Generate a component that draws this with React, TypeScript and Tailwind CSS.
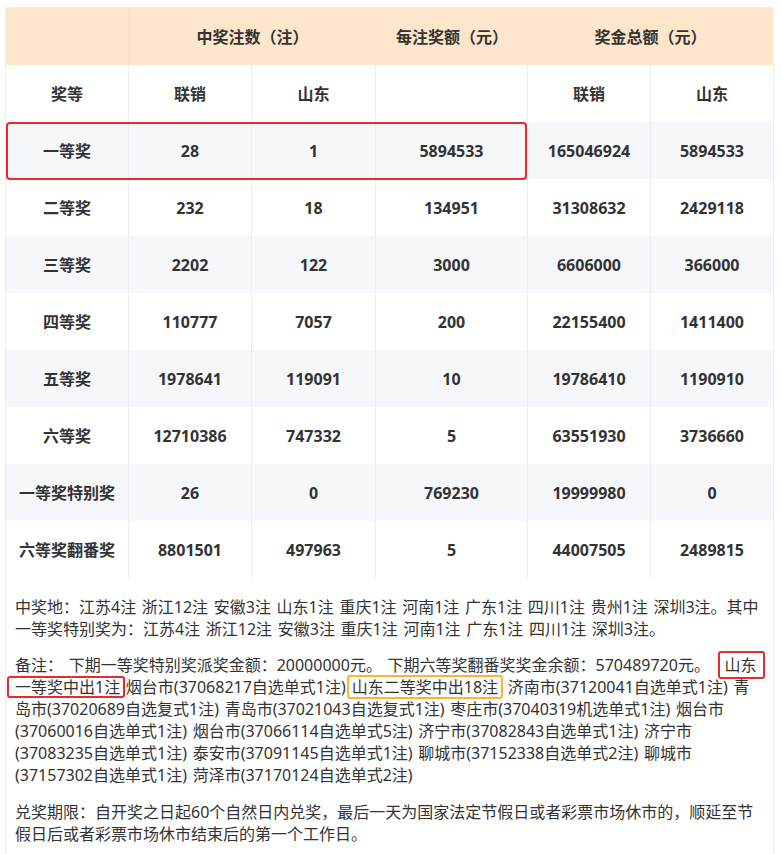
import React from 'react'

const rows = [
  ['一等奖', '28', '1', '5894533', '165046924', '5894533'],
  ['二等奖', '232', '18', '134951', '31308632', '2429118'],
  ['三等奖', '2202', '122', '3000', '6606000', '366000'],
  ['四等奖', '110777', '7057', '200', '22155400', '1411400'],
  ['五等奖', '1978641', '119091', '10', '19786410', '1190910'],
  ['六等奖', '12710386', '747332', '5', '63551930', '3736660'],
  ['一等奖特别奖', '26', '0', '769230', '19999980', '0'],
  ['六等奖翻番奖', '8801501', '497963', '5', '44007505', '2489815'],
]

const cell = 'h-[57px] flex items-center justify-center border-r border-[#ebeef5]'
const lastCell = 'h-[57px] flex items-center justify-center'

export default function App() {
  return (
    <div className="min-h-screen bg-white pt-[7px] pl-[5px]" style={{ fontFamily: '"Noto Sans", "Noto Sans CJK SC", sans-serif' }}>
      <div className="w-[769px] border-x border-t border-[#eeeeee] pb-[40px] text-[#333333]">
        <div className="relative grid grid-cols-[123px_123px_124px_152px_123px_122px] text-[16px] font-bold">
          {/* header row 1 */}
          <div className="h-[57px] border-r border-[#f5dfc6] bg-[#fee6cd]" />
          <div className="col-span-2 h-[57px] flex items-center justify-center bg-[#fee6cd]">中奖注数（注）</div>
          <div className="h-[57px] flex items-center justify-center bg-[#fee6cd]">每注奖额（元）</div>
          <div className="col-span-2 h-[57px] flex items-center justify-center bg-[#fee6cd]">奖金总额（元）</div>

          {/* header row 2 */}
          <div className={cell}>奖等</div>
          <div className={cell}>联销</div>
          <div className={cell}>山东</div>
          <div className={cell}></div>
          <div className={cell}>联销</div>
          <div className={lastCell}>山东</div>

          {rows.map((r, i) =>
            r.map((v, j) => (
              <div key={i + '-' + j} className={(j === 5 ? lastCell : cell) + (i % 2 === 0 ? ' bg-[#f5f7fa]' : ' bg-white')}>
                {v}
              </div>
            ))
          )}

          <div className="absolute left-0 top-[114px] w-[521px] h-[58px] border-2 border-[#e52b2b] rounded-[4px]" />
        </div>

        <div className="px-[9px] pt-[18px] text-[16px] leading-[22px] whitespace-nowrap [word-spacing:1.5px]">
          <p>
            中奖地：江苏4注 浙江12注 安徽3注 山东1注 重庆1注 河南1注 广东1注 四川1注 贵州1注 深圳3注。其中<br />
            一等奖特别奖为：江苏4注 浙江12注 安徽3注 重庆1注 河南1注 广东1注 四川1注 深圳3注。
          </p>
          <p className="mt-[14px]">
            备注： 下期一等奖特别奖派奖金额：20000000元。 下期六等奖翻番奖奖金余额：570489720元。{' '}
            <span className="inline-block leading-[24px] -my-[4px] border-2 border-[#e52b2b] rounded-[3px] pl-[5px] pr-[6px] ml-[2px]">山东</span>
            <br />
            <span className="inline-block leading-[18px] -my-[2px] border-2 border-[#e52b2b] rounded-[3px] pl-[6px] pr-[3px] -ml-[8px] -mr-[5px]">一等奖中出1注</span>{' '}
            烟台市(37068217自选单式1注)
            <span className="inline-block leading-[20px] -my-[3px] border-2 border-[#f5b731] rounded-[3px] px-[3px] ml-[1px] -mr-[1px]">山东二等奖中出18注</span>{' '}
            济南市(37120041自选单式1注) 青<br />
            岛市(37020689自选复式1注) 青岛市(37021043自选复式1注) 枣庄市(37040319机选单式1注) 烟台市<br />
            (37060016自选单式1注) 烟台市(37066114自选单式5注) 济宁市(37082843自选单式1注) 济宁市<br />
            (37083235自选单式1注) 泰安市(37091145自选单式1注) 聊城市(37152338自选单式2注) 聊城市<br />
            (37157302自选单式1注) 菏泽市(37170124自选单式2注)
          </p>
          <p className="mt-[15px]">
            兑奖期限：自开奖之日起60个自然日内兑奖，最后一天为国家法定节假日或者彩票市场休市的，顺延至节<br />
            假日后或者彩票市场休市结束后的第一个工作日。
          </p>
        </div>
      </div>
    </div>
  )
}
